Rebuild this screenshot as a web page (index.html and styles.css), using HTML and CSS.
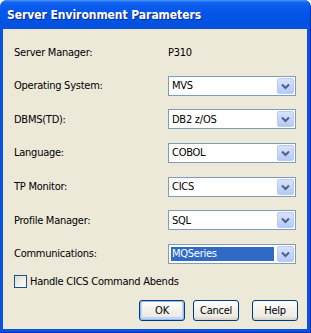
FILE: index.html
```html
<!DOCTYPE html>
<html>
<head>
<meta charset="utf-8">
<title>Server Environment Parameters</title>
<link rel="stylesheet" href="styles.css">
</head>
<body>
<div class="window">
  <div class="titlebar"><span class="title">Server Environment Parameters</span></div>
  <div class="panel">
    <div class="form">
      <span class="label">Server Manager:</span><span class="value">P310</span>
      <span class="label">Operating System:</span>
      <div class="combo"><span class="combo-text">MVS</span><span class="combo-btn"><svg width="15" height="16" viewBox="0 0 15 16"><path d="M4 6.5 L7.5 10 L11 6.5" fill="none" stroke="#4D6185" stroke-width="2"/></svg></span></div>
      <span class="label">DBMS(TD):</span>
      <div class="combo"><span class="combo-text">DB2 z/OS</span><span class="combo-btn"><svg width="15" height="16" viewBox="0 0 15 16"><path d="M4 6.5 L7.5 10 L11 6.5" fill="none" stroke="#4D6185" stroke-width="2"/></svg></span></div>
      <span class="label">Language:</span>
      <div class="combo"><span class="combo-text">COBOL</span><span class="combo-btn"><svg width="15" height="16" viewBox="0 0 15 16"><path d="M4 6.5 L7.5 10 L11 6.5" fill="none" stroke="#4D6185" stroke-width="2"/></svg></span></div>
      <span class="label">TP Monitor:</span>
      <div class="combo"><span class="combo-text">CICS</span><span class="combo-btn"><svg width="15" height="16" viewBox="0 0 15 16"><path d="M4 6.5 L7.5 10 L11 6.5" fill="none" stroke="#4D6185" stroke-width="2"/></svg></span></div>
      <span class="label">Profile Manager:</span>
      <div class="combo"><span class="combo-text">SQL</span><span class="combo-btn"><svg width="15" height="16" viewBox="0 0 15 16"><path d="M4 6.5 L7.5 10 L11 6.5" fill="none" stroke="#4D6185" stroke-width="2"/></svg></span></div>
      <span class="label">Communications:</span>
      <div class="combo"><span class="combo-text selected">MQSeries</span><span class="combo-btn"><svg width="15" height="16" viewBox="0 0 15 16"><path d="M4 6.5 L7.5 10 L11 6.5" fill="none" stroke="#4D6185" stroke-width="2"/></svg></span></div>
    </div>
    <label class="check"><span class="box"></span><span>Handle CICS Command Abends</span></label>
    <div class="buttons">
      <button class="btn btn-ok">OK</button>
      <button class="btn btn-cancel">Cancel</button>
      <button class="btn btn-help">Help</button>
    </div>
  </div>
</div>
</body>
</html>
```

FILE: styles.css
```css
html, body {
  margin: 0;
  padding: 0;
  background: #ffffff;
}
.window {
  width: 311px;
  height: 333px;
  box-sizing: border-box;
  background: #0A52E0;
  border-radius: 7px 7px 0 0;
  display: flex;
  flex-direction: column;
  font-family: "DejaVu Sans Condensed", "DejaVu Sans", sans-serif;
  font-stretch: condensed;
  font-size: 11px;
  letter-spacing: -0.25px;
  color: #000;
  overflow: hidden;
  border-right: 1px solid #0030B8;
  border-bottom: 1px solid #0030B8;
}
.titlebar {
  height: 29px;
  flex: none;
  display: flex;
  align-items: center;
  padding-left: 7px;
  padding-top: 1px;
  box-sizing: border-box;
  background: linear-gradient(#4C9BFF 0px, #1868F0 2px, #0A5CEC 6px, #0455E7 14px, #0252E2 24px, #0A50DA 29px);
}
.title {
  color: #fff;
  font-weight: bold;
  font-size: 12px;
  letter-spacing: -0.05px;
  text-shadow: 1px 1px 0 #0A2A9A;
}
.panel {
  flex: 1;
  margin: 0 3px 3px 3px;
  background: #ECE9D8;
  padding: 13px 9px 0 11px;
  display: flex;
  flex-direction: column;
}
.form {
  display: grid;
  grid-template-columns: 154px 128px;
  grid-auto-rows: 20px;
  row-gap: 13.67px;
  align-items: center;
}
.combo {
  height: 20px;
  box-sizing: border-box;
  border: 1px solid #7F9DB9;
  background: #fff;
  display: flex;
  align-items: stretch;
}
.combo-text {
  flex: 1;
  display: flex;
  align-items: center;
  padding-left: 3px;
}
.combo-text.selected {
  margin: 2px;
  padding-left: 1px;
  background: #316AC5;
  color: #fff;
}
.combo-btn {
  width: 15px;
  margin: 1px;
  border: 1px solid #B9CCF5;
  border-radius: 2px;
  background: linear-gradient(#D7E2FC, #C3D3FA 60%, #B5C8F7);
  display: flex;
  align-items: center;
  justify-content: center;
}
.combo-btn svg {
  display: block;
}
.check {
  margin-top: 11px;
  display: flex;
  align-items: center;
  height: 13px;
  gap: 3px;
}
.box {
  width: 13px;
  height: 13px;
  box-sizing: border-box;
  border: 1px solid #1C5180;
  background: linear-gradient(135deg, #DCDCD7, #FFFFFF);
}
.buttons {
  margin-top: 12px;
  display: flex;
  justify-content: flex-end;
}
.btn {
  width: 46px;
  height: 21px;
  box-sizing: border-box;
  border: 1px solid #003C74;
  border-radius: 3px;
  background: linear-gradient(#FFFFFF, #F4F3EE 40%, #ECEBE5 80%, #D6D0C5);
  font-family: "DejaVu Sans Condensed", "DejaVu Sans", sans-serif;
  font-stretch: condensed;
  font-size: 11px;
  letter-spacing: -0.25px;
  color: #000;
  padding: 0;
}
.btn-ok {
  box-shadow: inset 0 0 0 1px #9CB9EC, inset 0 -1px 0 2px #C2D5F8;
}
.btn-cancel {
  margin-left: 8px;
}
.btn-help {
  margin-left: 13px;
}
```
